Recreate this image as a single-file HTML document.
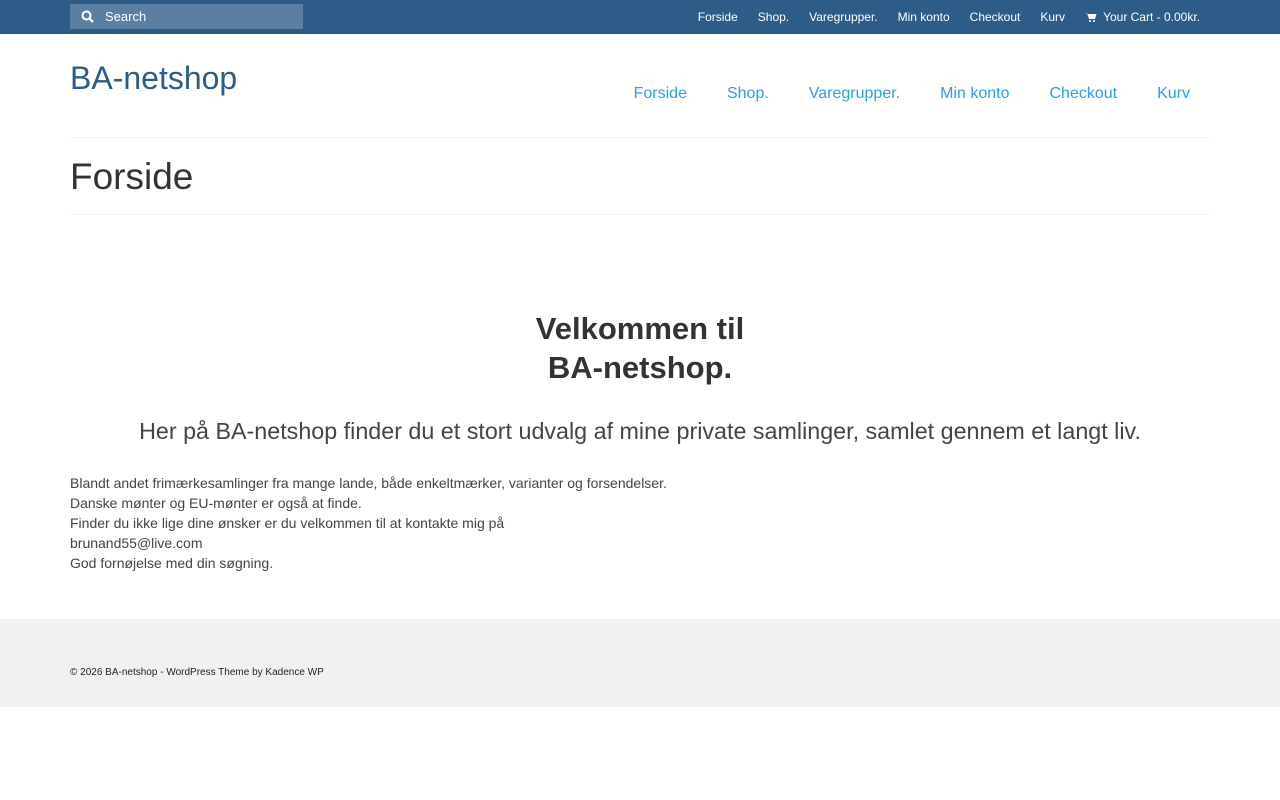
<!DOCTYPE html>
<html><head><meta charset="utf-8"><style>
*{margin:0;padding:0;box-sizing:border-box}
body{width:1280px;height:800px;background:#fff;font-family:"Liberation Sans",sans-serif;color:#444;position:relative;overflow:hidden}
.top{position:absolute;left:0;top:0;width:1280px;height:34px;background:#2d5c88}
.search{position:absolute;left:70px;top:4px;width:233px;height:25px;background:#5a7fa3}
.search span{position:absolute;left:35px;top:5px;font-size:13px;color:#fff}
.search svg{position:absolute;left:11px;top:6px}
.tnav{position:absolute;right:80px;top:10px;font-size:12px;color:#fff;white-space:nowrap}
.tnav span{margin-left:20px}
.logo{position:absolute;left:70px;top:60px;font-size:32px;color:#2d5c88}
.mnav{position:absolute;right:90px;top:85px;font-size:16px;color:#2a9fe8;white-space:nowrap}
.mnav span{margin-left:40px}
.hr{position:absolute;left:70px;width:1140px;height:1px;background:#eee}
h1{position:absolute;left:70px;top:156px;font-size:37px;font-weight:normal;color:#333}
h2{position:absolute;left:0;width:1280px;top:309px;text-align:center;font-size:31px;line-height:39px;color:#333;font-weight:bold}
h3{position:absolute;left:0;width:1280px;top:418px;text-align:center;font-size:23.3px;font-weight:normal;color:#444}
.p{position:absolute;left:70px;top:473px;font-size:14px;line-height:20px;color:#444}
.foot{position:absolute;left:0;top:619px;width:1280px;height:88px;background:#f1f1f1}
.foot div{position:absolute;left:70px;top:48px;font-size:10px;color:#222}
</style></head><body>
<div class="top">
<div class="search"><svg width="14" height="14" viewBox="0 0 14 14"><circle cx="5.5" cy="5.5" r="4" fill="none" stroke="#fff" stroke-width="2"/><path d="M8.5 8.5L12 12" stroke="#fff" stroke-width="2.4"/></svg><span>Search</span></div>
<div class="tnav"><span>Forside</span><span>Shop.</span><span>Varegrupper.</span><span>Min konto</span><span>Checkout</span><span>Kurv</span><span><svg width="12" height="10" viewBox="0 0 12 10" style="vertical-align:-1px;margin-right:6px"><path d="M0 1h2l2 6h6l1.5-5H3" fill="#fff"/><circle cx="5" cy="9" r="1" fill="#fff"/><circle cx="9" cy="9" r="1" fill="#fff"/></svg>Your Cart - 0.00kr.</span></div>
</div>
<div class="logo">BA-netshop</div>
<div class="mnav"><span>Forside</span><span>Shop.</span><span>Varegrupper.</span><span>Min konto</span><span>Checkout</span><span>Kurv</span></div>
<div class="hr" style="top:137px"></div>
<h1>Forside</h1>
<div class="hr" style="top:214px"></div>
<h2>Velkommen til<br>BA-netshop.</h2>
<h3>Her på BA-netshop finder du et stort udvalg af mine private samlinger, samlet gennem et langt liv.</h3>
<div class="p">Blandt andet frimærkesamlinger fra mange lande, både enkeltmærker, varianter og forsendelser.<br>Danske mønter og EU-mønter er også at finde.<br>Finder du ikke lige dine ønsker er du velkommen til at kontakte mig på<br>brunand55@live.com<br>God fornøjelse med din søgning.</div>
<div class="foot"><div>© 2026 BA-netshop - WordPress Theme by Kadence WP</div></div>
</body></html>
